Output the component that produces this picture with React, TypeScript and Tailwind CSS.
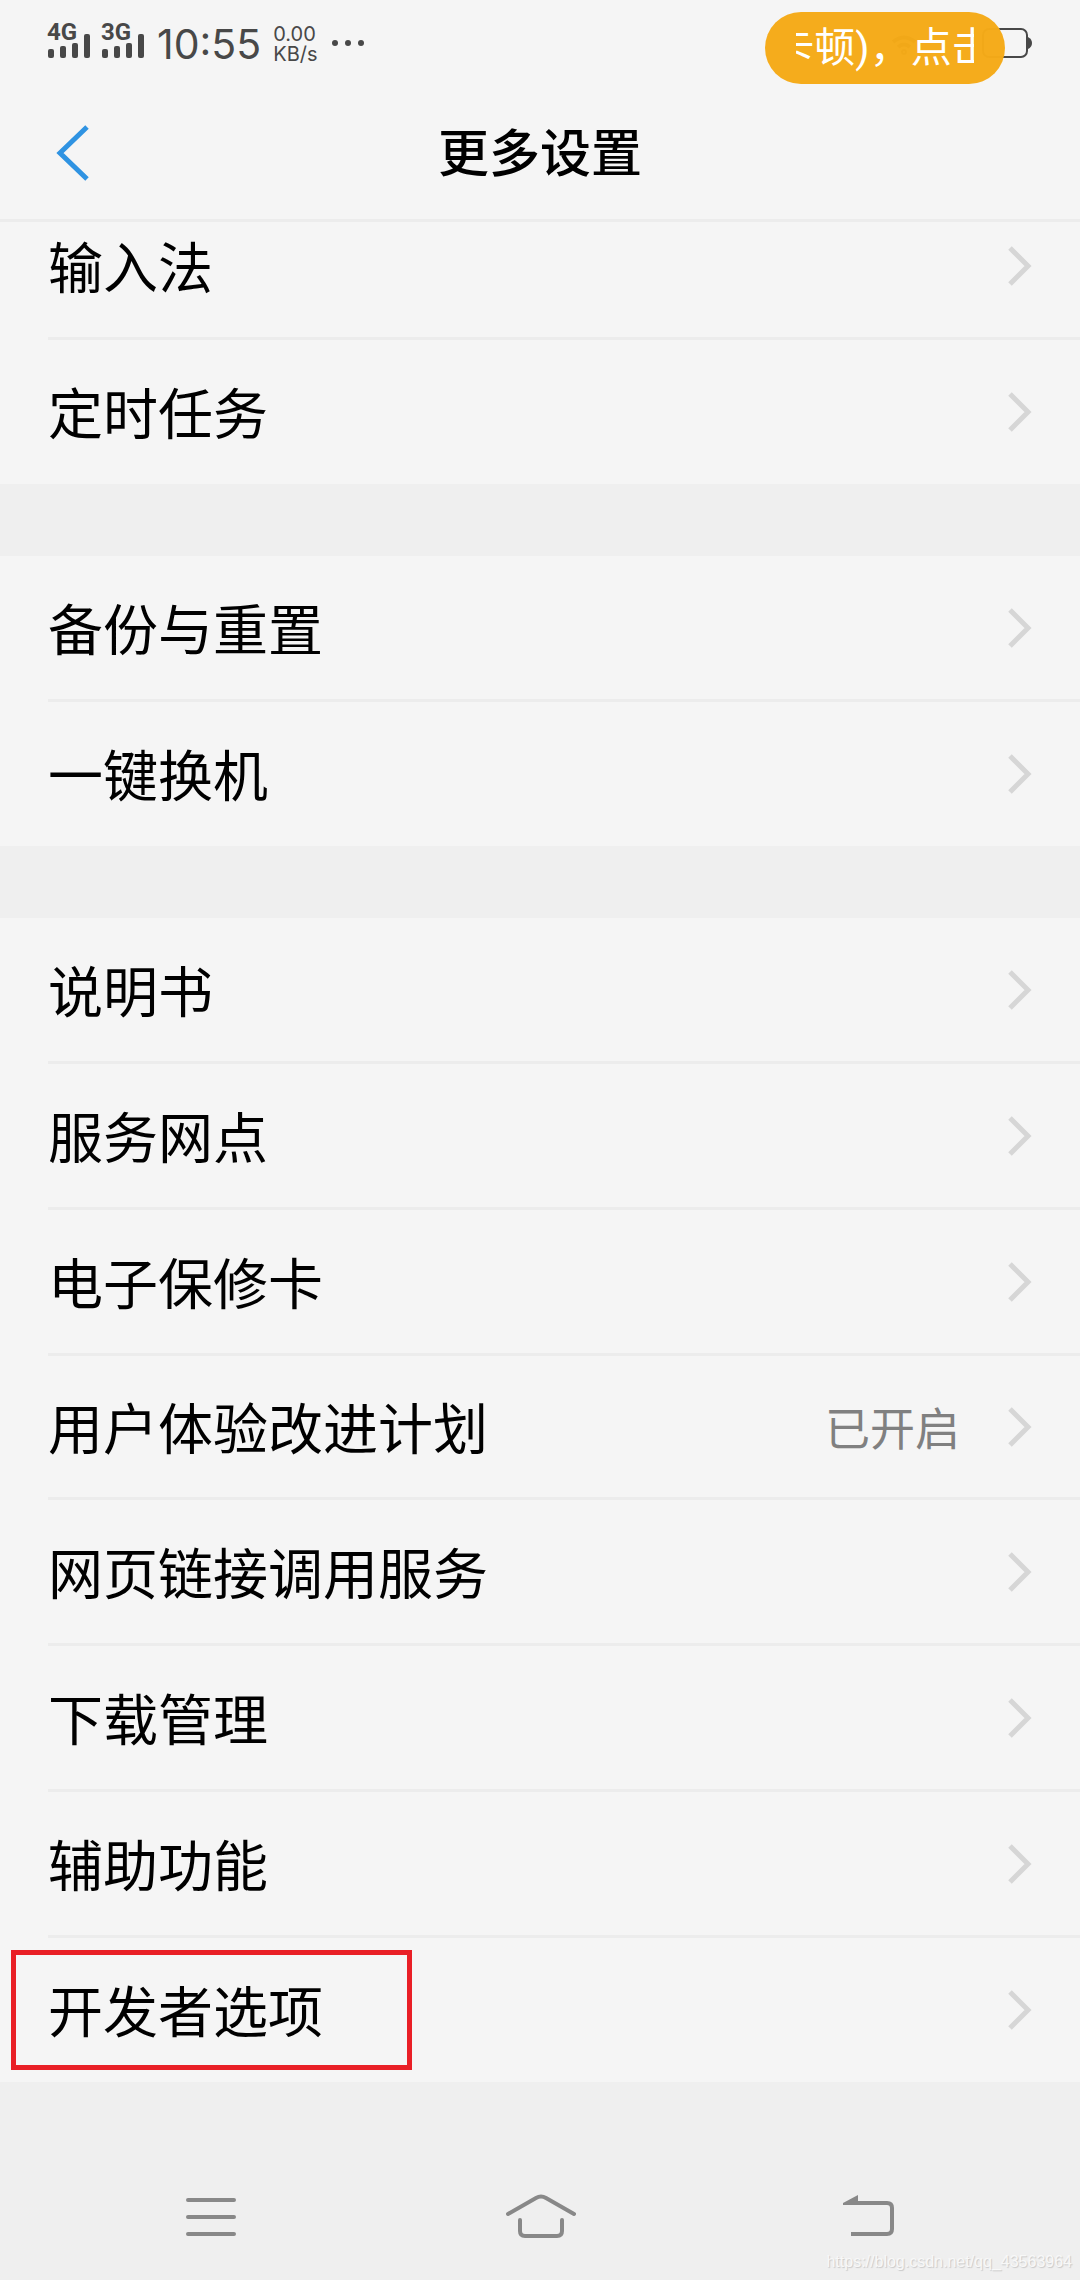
import React from 'react';
import clsx from 'clsx';

interface SettingItem {
  label: string;
  value?: string;
  highlighted?: boolean;
}

const groups: SettingItem[][] = [
  [{ label: '输入法' }, { label: '定时任务' }],
  [{ label: '备份与重置' }, { label: '一键换机' }],
  [
    { label: '说明书' },
    { label: '服务网点' },
    { label: '电子保修卡' },
    { label: '用户体验改进计划', value: '已开启' },
    { label: '网页链接调用服务' },
    { label: '下载管理' },
    { label: '辅助功能' },
    { label: '开发者选项', highlighted: true },
  ],
];

const Signal: React.FC<{ label: string }> = ({ label }) => (
  <div className="relative h-[42px] w-[44px]">
    <span className="absolute left-0 top-0 text-[24px] leading-[18px] font-bold">{label}</span>
    <svg className="absolute bottom-[6px] left-0" width="44" height="26" fill="currentColor">
      <rect x="1" y="16" width="6" height="9" rx="2" />
      <rect x="13" y="13" width="6" height="12" rx="2" />
      <rect x="25" y="10" width="6" height="15" rx="2" />
      <rect x="37" y="1" width="6" height="24" rx="2" />
    </svg>
  </div>
);

const StatusBar: React.FC = () => (
  <div className="flex h-[84px] items-center justify-between pl-[47px] pr-12 pt-1 font-[Roboto,'Noto_Sans_CJK_SC',sans-serif] text-[#484848]">
    <div className="flex items-center">
      <div className="flex gap-[10px]">
        <Signal label="4G" />
        <Signal label="3G" />
      </div>
      <span className="ml-3 text-[41px] leading-[44px] font-[Inter,sans-serif]">10:55</span>
      <div className="ml-3 flex flex-col text-[20px] leading-[20px] font-[Inter,sans-serif]">
        <span>0.00</span>
        <span>KB/s</span>
      </div>
      <svg className="ml-3" width="36" height="10" fill="currentColor">
        <circle cx="5" cy="4" r="3" />
        <circle cx="18" cy="4" r="3" />
        <circle cx="31" cy="4" r="3" />
      </svg>
    </div>
    <div className="relative flex items-center gap-16">
      <svg width="28" height="22" fill="none" stroke="currentColor" strokeWidth="4">
        <path d="M3 9Q14 0 25 9M8 14Q14 9 20 14" />
        <circle cx="14" cy="19" r="1" />
      </svg>
      <svg width="50" height="32" fill="none">
        <rect x="1" y="1" width="44" height="28" rx="6" stroke="#484848" strokeWidth="2" />
        <path d="M46 9q4 2 4 6t-4 6z" fill="#484848" />
      </svg>
      {/* scrolling notice, drawn over the status icons */}
      <div className="absolute -top-4 right-[27px] flex h-[72px] w-[240px] items-center justify-center rounded-full bg-[#f5aa17]/98">
        <div className="flex w-[178px] justify-center overflow-hidden pr-1 whitespace-nowrap text-[41px] leading-[60px] text-white">
          <span>卡顿)，点击</span>
        </div>
      </div>
    </div>
  </div>
);

const Header: React.FC = () => (
  <header className="relative flex h-[138px] items-center justify-center border-b-3 border-[#ececec]">
    <button aria-label="返回" className="absolute left-[54px] top-10">
      <svg width="38" height="58" fill="none" stroke="#2f93e2" strokeWidth="5">
        <path d="M33 3L6 29L33 55" />
      </svg>
    </button>
    <h1 className="pb-1 text-[51px] leading-[60px] font-medium">更多设置</h1>
  </header>
);

const SettingRow: React.FC<{ item: SettingItem; last: boolean }> = ({ item, last }) => (
  <li className="pl-12">
    <button
      className={clsx(
        'relative flex w-full items-center pr-12 text-left',
        last || item.value ? 'h-36' : 'h-[146px]',
        !last && 'border-b-3 border-[#ececec]'
      )}
    >
      {item.highlighted && (
        <span className="absolute -left-[37px] top-3 h-[120px] w-[401px] border-5 border-[#e91f26]" />
      )}
      <span className="flex-1 pb-1 text-[55px] leading-[80px]">{item.label}</span>
      {item.value && <span className="mr-12 text-[45px] leading-[60px] text-[#808080]">{item.value}</span>}
      <svg width="24" height="40" fill="none" stroke="#d6d6d6" strokeWidth="5">
        <path d="M2 2L20 20L2 38" />
      </svg>
    </button>
  </li>
);

const NavBar: React.FC = () => (
  <nav className="flex h-32 items-center justify-between px-[183px] text-[#888]">
    <button aria-label="菜单">
      <svg width="54" height="44" fill="none" stroke="currentColor" strokeWidth="4" strokeLinecap="round">
        <path d="M5 6H51M5 23H51M5 40H51" />
      </svg>
    </button>
    <button aria-label="主页">
      <svg width="72" height="46" fill="none" stroke="currentColor" strokeWidth="4" strokeLinecap="round">
        <path d="M4 21L32 5Q37 2 42 5L70 21M16 27V38Q16 43 21 43H53Q58 43 58 38V27" />
      </svg>
    </button>
    <button aria-label="后退">
      <svg width="54" height="44" fill="none" stroke="currentColor" strokeWidth="4">
        <path d="M8 9H44Q49 9 49 14V35Q49 40 44 40H8" />
        <path d="M0 9L15 1V11H0Z" fill="currentColor" stroke="none" />
      </svg>
    </button>
  </nav>
);

export default function App() {
  return (
    <div className="flex min-h-screen flex-col bg-[#efefef] font-['Noto_Sans_CJK_SC',sans-serif] text-black">
      <div className="bg-[#f5f5f5]">
        <StatusBar />
        <Header />
      </div>
      <main className="flex flex-1 flex-col gap-[72px] overflow-hidden">
        {groups.map((items, i) => (
          <ul key={i} className={clsx('bg-[#f5f5f5]', i === 0 && '-mt-7')}>
            {items.map((item, j) => (
              <SettingRow key={item.label} item={item} last={j === items.length - 1} />
            ))}
          </ul>
        ))}
      </main>
      <div className="relative">
        <NavBar />
        <span className="absolute bottom-2 right-2 font-['Liberation_Sans',sans-serif] text-[16px] leading-[20px] text-[#f8f8f8] [text-shadow:1px_1px_1px_#c8c8c8]">
          https://blog.csdn.net/qq_43563964
        </span>
      </div>
    </div>
  );
}
